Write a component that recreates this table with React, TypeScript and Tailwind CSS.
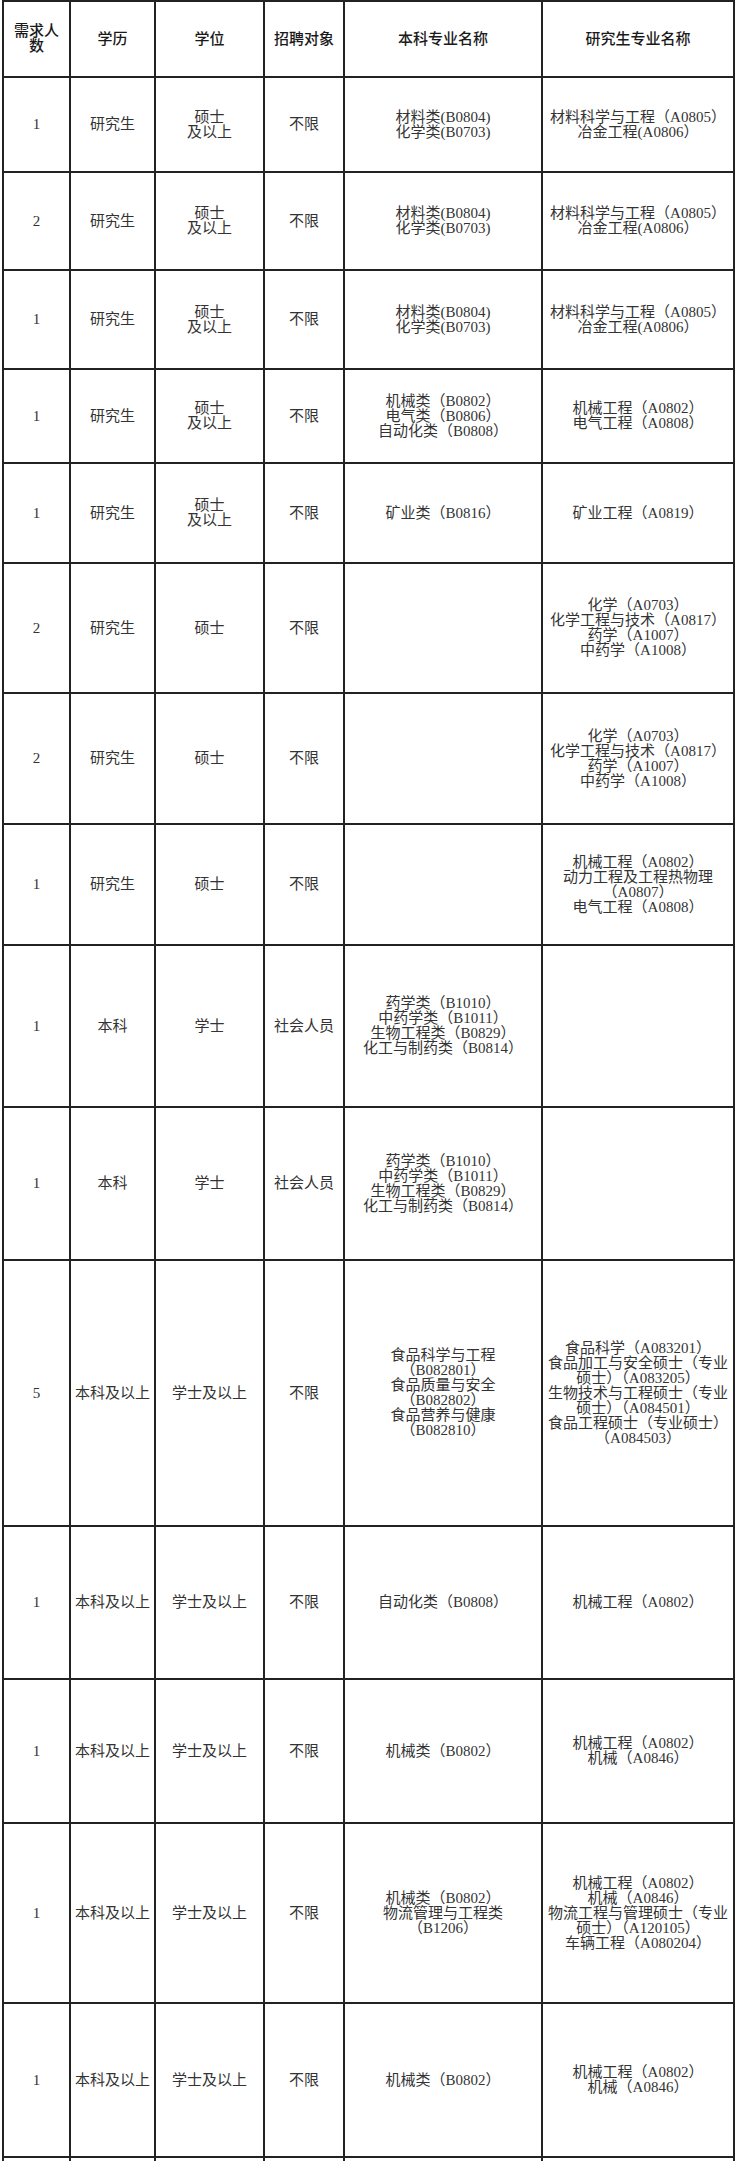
import React from "react";

type Row = {
  h: number;
  n: string;
  edu: string;
  deg: string[];
  target: string;
  ug: string[];
  pg: string[];
};

const degM = ["硕士", "及以上"];
const ugMat = ["材料类(B0804)", "化学类(B0703)"];
const pgMat = ["材料科学与工程（A0805）", "冶金工程(A0806）"];
const pgChem = ["化学（A0703）", "化学工程与技术（A0817）", "药学（A1007）", "中药学（A1008）"];
const ugPharm = ["药学类（B1010）", "中药学类（B1011）", "生物工程类（B0829）", "化工与制药类（B0814）"];

const rows: Row[] = [
  { h: 95, n: "1", edu: "研究生", deg: degM, target: "不限", ug: ugMat, pg: pgMat },
  { h: 98, n: "2", edu: "研究生", deg: degM, target: "不限", ug: ugMat, pg: pgMat },
  { h: 99, n: "1", edu: "研究生", deg: degM, target: "不限", ug: ugMat, pg: pgMat },
  {
    h: 94,
    n: "1",
    edu: "研究生",
    deg: degM,
    target: "不限",
    ug: ["机械类（B0802）", "电气类（B0806）", "自动化类（B0808）"],
    pg: ["机械工程（A0802）", "电气工程（A0808）"],
  },
  { h: 100, n: "1", edu: "研究生", deg: degM, target: "不限", ug: ["矿业类（B0816）"], pg: ["矿业工程（A0819）"] },
  { h: 130, n: "2", edu: "研究生", deg: ["硕士"], target: "不限", ug: [], pg: pgChem },
  { h: 131, n: "2", edu: "研究生", deg: ["硕士"], target: "不限", ug: [], pg: pgChem },
  {
    h: 121,
    n: "1",
    edu: "研究生",
    deg: ["硕士"],
    target: "不限",
    ug: [],
    pg: ["机械工程（A0802）", "动力工程及工程热物理", "（A0807）", "电气工程（A0808）"],
  },
  { h: 162, n: "1", edu: "本科", deg: ["学士"], target: "社会人员", ug: ugPharm, pg: [] },
  { h: 153, n: "1", edu: "本科", deg: ["学士"], target: "社会人员", ug: ugPharm, pg: [] },
  {
    h: 266,
    n: "5",
    edu: "本科及以上",
    deg: ["学士及以上"],
    target: "不限",
    ug: ["食品科学与工程", "（B082801）", "食品质量与安全", "（B082802）", "食品营养与健康", "（B082810）"],
    pg: [
      "食品科学（A083201）",
      "食品加工与安全硕士（专业",
      "硕士）（A083205）",
      "生物技术与工程硕士（专业",
      "硕士）（A084501）",
      "食品工程硕士（专业硕士）",
      "（A084503）",
    ],
  },
  { h: 153, n: "1", edu: "本科及以上", deg: ["学士及以上"], target: "不限", ug: ["自动化类（B0808）"], pg: ["机械工程（A0802）"] },
  {
    h: 144,
    n: "1",
    edu: "本科及以上",
    deg: ["学士及以上"],
    target: "不限",
    ug: ["机械类（B0802）"],
    pg: ["机械工程（A0802）", "机械（A0846）"],
  },
  {
    h: 180,
    n: "1",
    edu: "本科及以上",
    deg: ["学士及以上"],
    target: "不限",
    ug: ["机械类（B0802）", "物流管理与工程类", "（B1206）"],
    pg: ["机械工程（A0802）", "机械（A0846）", "物流工程与管理硕士（专业", "硕士）（A120105）", "车辆工程（A080204）"],
  },
  {
    h: 154,
    n: "1",
    edu: "本科及以上",
    deg: ["学士及以上"],
    target: "不限",
    ug: ["机械类（B0802）"],
    pg: ["机械工程（A0802）", "机械（A0846）"],
  },
];

function Lines({ lines }: { lines: string[] }) {
  return (
    <div className="flex flex-col items-center">
      {lines.map((l, i) => (
        <div key={i} className="whitespace-nowrap leading-[15px]">
          {l}
        </div>
      ))}
    </div>
  );
}

const td = "border-2 border-[#222] p-0 text-center align-middle";

export default function App() {
  const headers: string[][] = [["需求人", "数"], ["学历"], ["学位"], ["招聘对象"], ["本科专业名称"], ["研究生专业名称"]];
  return (
    <div className="h-[2161px] w-[738px] overflow-hidden bg-white font-['Liberation_Serif','Noto_Sans_CJK_SC',serif] text-[15px] text-[#333]">
      <table className="ml-[2px] w-[733px] table-fixed border-collapse">
        <colgroup>
          <col className="w-[67px]" />
          <col className="w-[85px]" />
          <col className="w-[109px]" />
          <col className="w-[80px]" />
          <col className="w-[198px]" />
          <col className="w-[192px]" />
        </colgroup>
        <thead>
          <tr className="h-[76px]">
            {headers.map((h, i) => (
              <th key={i} className={`${td} font-medium text-[#1a1a1a]`}>
                <Lines lines={h} />
              </th>
            ))}
          </tr>
        </thead>
        <tbody>
          {rows.map((r, i) => (
            <tr key={i} style={{ height: r.h }}>
              <td className={td}>{r.n}</td>
              <td className={td}>
                <Lines lines={[r.edu]} />
              </td>
              <td className={td}>
                <Lines lines={r.deg} />
              </td>
              <td className={td}>
                <Lines lines={[r.target]} />
              </td>
              <td className={td}>
                <Lines lines={r.ug} />
              </td>
              <td className={td}>
                <Lines lines={r.pg} />
              </td>
            </tr>
          ))}
          <tr className="h-[120px]">
            <td className={td}></td>
            <td className={td}></td>
            <td className={td}></td>
            <td className={td}></td>
            <td className={td}></td>
            <td className={td}></td>
          </tr>
        </tbody>
      </table>
    </div>
  );
}
